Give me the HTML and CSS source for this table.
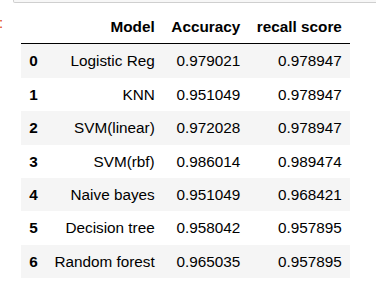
FILE: index.html
```html
<!DOCTYPE html>
<html>
<head>
<meta charset="utf-8">
<link rel="stylesheet" href="styles.css">
</head>
<body>
<div class="input-area"></div>
<div class="output">
  <div class="prompt"><span class="colon">:</span></div>
  <table class="dataframe">
    <thead>
      <tr><th></th><th>Model</th><th>Accuracy</th><th>recall score</th></tr>
    </thead>
    <tbody>
      <tr><th>0</th><td>Logistic Reg</td><td>0.979021</td><td>0.978947</td></tr>
      <tr><th>1</th><td>KNN</td><td>0.951049</td><td>0.978947</td></tr>
      <tr><th>2</th><td>SVM(linear)</td><td>0.972028</td><td>0.978947</td></tr>
      <tr><th>3</th><td>SVM(rbf)</td><td>0.986014</td><td>0.989474</td></tr>
      <tr><th>4</th><td>Naive bayes</td><td>0.951049</td><td>0.968421</td></tr>
      <tr><th>5</th><td>Decision tree</td><td>0.958042</td><td>0.957895</td></tr>
      <tr><th>6</th><td>Random forest</td><td>0.965035</td><td>0.957895</td></tr>
    </tbody>
  </table>
</div>
</body>
</html>
```

FILE: styles.css
```css
html, body {
  margin: 0;
  padding: 0;
  background: #ffffff;
  overflow: hidden;
}
body {
  font-family: "Liberation Sans", Arial, sans-serif;
  color: #000000;
}
.input-area {
  margin-left: 13px;
  margin-right: -6px;
  height: 2px;
  border: 1px solid #cfcfcf;
  border-top: none;
  border-radius: 0 0 2px 2px;
  background: #f7f7f7;
}
.output {
  display: flex;
  align-items: flex-start;
  margin-top: 7px;
}
.prompt {
  width: 21px;
  flex: 0 0 21px;
  color: #d84315;
  font-size: 15px;
  line-height: 17px;
  padding-top: 4px;
}
.colon {
  display: inline-block;
  margin-left: -1px;
}
.dataframe {
  border-collapse: collapse;
  border-spacing: 0;
  font-size: 15.3px;
  line-height: 17.4px;
}
.dataframe th,
.dataframe td {
  padding: 8px 8.3px;
  text-align: right;
  vertical-align: middle;
  white-space: nowrap;
}
.dataframe th {
  font-weight: bold;
}
.dataframe thead th {
  border-bottom: 1px solid #000000;
}
.dataframe tbody tr:nth-child(odd) {
  background: #f5f5f5;
}
```
